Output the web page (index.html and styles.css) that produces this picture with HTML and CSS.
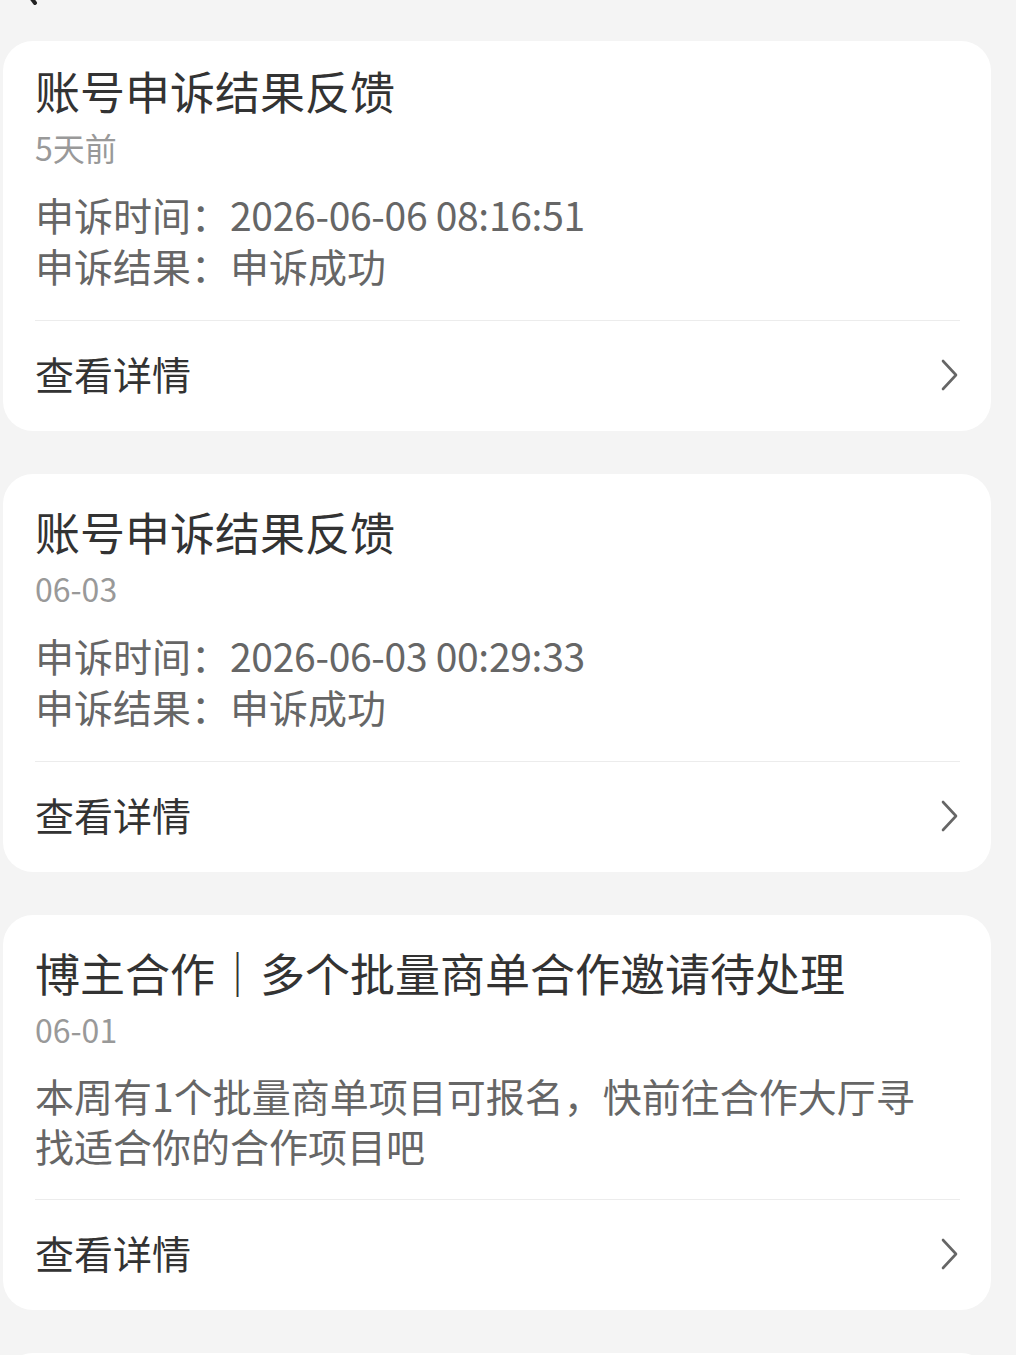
FILE: index.html
```html
<!DOCTYPE html>
<html lang="zh-CN">
<head>
<meta charset="utf-8">
<title>消息</title>
<link rel="stylesheet" href="styles.css">
</head>
<body>
<div class="page">
  <div class="topbar">
    <svg class="back" width="20" height="40" viewBox="0 0 20 40"><path d="M16 4 L4 20 L16 36" fill="none" stroke="#222" stroke-width="4" stroke-linecap="round" stroke-linejoin="round"/></svg>
  </div>

  <div class="card card-first">
    <div class="title">账号申诉结果反馈</div>
    <div class="date">5天前</div>
    <div class="info">
      <div>申诉时间：<span class="val">2026-06-06 08:16:51</span></div>
      <div>申诉结果：申诉成功</div>
    </div>
    <div class="divider"></div>
    <div class="detail">
      <span>查看详情</span>
      <svg class="chev" width="18" height="32" viewBox="0 0 18 32"><path d="M2 2 L15 16 L2 30" fill="none" stroke="#666" stroke-width="2.6" stroke-linecap="round" stroke-linejoin="round"/></svg>
    </div>
  </div>

  <div class="card">
    <div class="title">账号申诉结果反馈</div>
    <div class="date">06-03</div>
    <div class="info">
      <div>申诉时间：<span class="val">2026-06-03 00:29:33</span></div>
      <div>申诉结果：申诉成功</div>
    </div>
    <div class="divider"></div>
    <div class="detail">
      <span>查看详情</span>
      <svg class="chev" width="18" height="32" viewBox="0 0 18 32"><path d="M2 2 L15 16 L2 30" fill="none" stroke="#666" stroke-width="2.6" stroke-linecap="round" stroke-linejoin="round"/></svg>
    </div>
  </div>

  <div class="card">
    <div class="title">博主合作｜多个批量商单合作邀请待处理</div>
    <div class="date">06-01</div>
    <div class="info body">本周有1个批量商单项目可报名，快前往合作大厅寻找适合你的合作项目吧</div>
    <div class="divider"></div>
    <div class="detail">
      <span>查看详情</span>
      <svg class="chev" width="18" height="32" viewBox="0 0 18 32"><path d="M2 2 L15 16 L2 30" fill="none" stroke="#666" stroke-width="2.6" stroke-linecap="round" stroke-linejoin="round"/></svg>
    </div>
  </div>

  <div class="card card-next"></div>
</div>
</body>
</html>
```

FILE: styles.css
```css
* { box-sizing: border-box; }
html, body {
  margin: 0;
  padding: 0;
  background: #f4f4f4;
}
body {
  font-family: "Noto Sans CJK SC", "Noto Sans", sans-serif;
  color: #333;
  overflow: hidden;
  height: 1355px;
}
.page {
  width: 988px;
  margin-left: 3px;
  display: flex;
  flex-direction: column;
  gap: 43px;
}
.topbar {
  height: 41px;
  margin-bottom: -43px;
  overflow: hidden;
  padding-left: 16px;
}
.back {
  display: block;
  margin-top: -33px;
}
.card {
  background: #fff;
  border-radius: 30px;
  padding: 28px 31px 0 32px;
  display: flex;
  flex-direction: column;
}
.card-first {
  padding-top: 20px;
}
.title {
  font-size: 45px;
  line-height: 60px;
  color: #333;
  font-weight: 400;
  white-space: nowrap;
}
.date {
  font-size: 32px;
  line-height: 44px;
  margin-top: 4px;
  color: #999;
}
.info {
  margin-top: 20px;
  font-size: 39px;
  line-height: 51px;
  color: #666;
}
.val {
  letter-spacing: -0.3px;
}
.info.body {
  line-height: 50px;
  margin-top: 19px;
  margin-bottom: 0;
  padding-right: 30px;
}
.divider {
  height: 1px;
  background: #ececec;
  margin-top: 29px;
}
.detail {
  height: 110px;
  padding-bottom: 6px;
  display: flex;
  align-items: center;
  justify-content: space-between;
  font-size: 39px;
  color: #333;
}
.chev {
  margin-right: 1px;
  margin-top: 4px;
}
.card-next {
  height: 60px;
}
```
